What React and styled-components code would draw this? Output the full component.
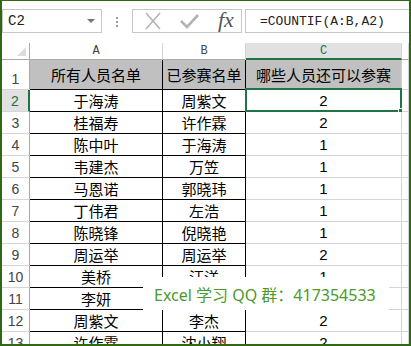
import React from "react";
import styled, { createGlobalStyle } from "styled-components";

const GREEN = "#217346";

const rows = [
  ["于海涛", "周紫文", "2"],
  ["桂福寿", "许作霖", "2"],
  ["陈中叶", "于海涛", "1"],
  ["韦建杰", "万笠", "1"],
  ["马恩诺", "郭晓玮", "1"],
  ["丁伟君", "左浩", "1"],
  ["陈晓锋", "倪晓艳", "1"],
  ["周运举", "周运举", "2"],
  ["美桥", "汪洋", "1"],
  ["李妍", "", ""],
  ["周紫文", "李杰", "2"],
  ["许作霖", "沈小翔", "2"],
];

function App() {
  return (
    <>
      <GlobalStyle />
      <Frame>
        <Toolbar>
          <NameBox>
            <span>C2</span>
            <Caret />
          </NameBox>
          <Grip>
            <i />
            <i />
            <i />
          </Grip>
          <ButtonsBox>
            <IconSlot>
              <svg width="20" height="18" viewBox="0 0 20 18">
                <path d="M3 1 L17 17 M17 1 L3 17" stroke="#b4b4b4" strokeWidth="1.6" fill="none" />
              </svg>
            </IconSlot>
            <IconSlot>
              <svg width="20" height="18" viewBox="0 0 20 18">
                <path d="M2 9 L8 15 L19 3" stroke="#b4b4b4" strokeWidth="2.6" fill="none" />
              </svg>
            </IconSlot>
            <Fx>fx</Fx>
          </ButtonsBox>
          <FormulaBox>=COUNTIF(A:B,A2)</FormulaBox>
        </Toolbar>

        <Sheet>
          <Corner>
            <CornerMark />
          </Corner>
          <ColHead>A</ColHead>
          <ColHead>B</ColHead>
          <ColHead $active>C</ColHead>
          <ColHead />

          <RowHead>1</RowHead>
          <Cell $fill $black>所有人员名单</Cell>
          <Cell $fill $black>已参赛名单</Cell>
          <Cell $fill>哪些人员还可以参赛</Cell>
          <Cell />

          {rows.map((r, i) => (
            <React.Fragment key={i}>
              <RowHead $active={i === 0}>{i + 2}</RowHead>
              <Cell $black>{r[0]}</Cell>
              <Cell $black>{r[1]}</Cell>
              <Cell $num>
                {r[2]}
                {i === 0 && (
                  <Selection>
                    <Handle />
                  </Selection>
                )}
              </Cell>
              <Cell />
            </React.Fragment>
          ))}
        </Sheet>

        <Watermark>Excel 学习 QQ 群：417354533</Watermark>
      </Frame>
    </>
  );
}

export default App;

const GlobalStyle = createGlobalStyle`
  html, body {
    margin: 0;
    padding: 0;
    background: #fff;
  }
  body {
    font-family: "Noto Sans CJK SC", sans-serif;
  }
`;

const Frame = styled.div`
  position: relative;
  width: 411px;
  height: 346px;
  box-sizing: border-box;
  border: 2px solid #2e6a14;
  border-top-width: 1px;
  overflow: hidden;
  display: flex;
  flex-direction: column;
`;

const Toolbar = styled.div`
  height: 42px;
  flex-shrink: 0;
  box-sizing: border-box;
  padding-top: 8px;
  display: flex;
  align-items: flex-start;
`;

const NameBox = styled.div`
  width: 100px;
  height: 24px;
  box-sizing: border-box;
  border: 1px solid #c6c6c6;
  padding: 0 6px 0 5px;
  display: flex;
  align-items: center;
  justify-content: space-between;
  font-family: "Liberation Mono", monospace;
  font-size: 14px;
  color: #222;
`;

const Caret = styled.span`
  width: 0;
  height: 0;
  border-left: 4px solid transparent;
  border-right: 4px solid transparent;
  border-top: 4px solid #777;
`;

const Grip = styled.div`
  margin: 8px 0 0 14px;
  display: flex;
  flex-direction: column;
  gap: 2px;

  i {
    display: block;
    width: 2px;
    height: 2px;
    background: #9a9a9a;
  }
`;

const ButtonsBox = styled.div`
  margin-left: 14px;
  width: 110px;
  height: 24px;
  box-sizing: border-box;
  border: 1px solid #c6c6c6;
  display: flex;
  align-items: center;
  padding-left: 9px;
  gap: 14px;
`;

const IconSlot = styled.span`
  display: flex;
  width: 22px;
  justify-content: center;
`;

const Fx = styled.span`
  font-family: "Liberation Serif", serif;
  font-style: italic;
  font-size: 22px;
  color: #555;
  line-height: 1;
  margin: -2px 0 0 4px;
`;

const FormulaBox = styled.div`
  margin-left: 3px;
  flex: 1;
  height: 24px;
  box-sizing: border-box;
  border: 1px solid #c6c6c6;
  border-right: none;
  padding-left: 14px;
  display: flex;
  align-items: center;
  font-family: "Liberation Mono", monospace;
  font-size: 13px;
  color: #222;
`;

const Sheet = styled.div`
  display: grid;
  grid-template-columns: 28px 133px 83px 156px 1fr;
  grid-template-rows: 17px 30px;
  grid-auto-rows: 22px;
`;

const Corner = styled.div`
  position: relative;
  box-sizing: border-box;
  border-right: 1px solid #ababab;
  border-bottom: 1px solid #ababab;
`;

const CornerMark = styled.span`
  position: absolute;
  right: 3px;
  bottom: 3px;
  width: 0;
  height: 0;
  border-left: 9px solid transparent;
  border-bottom: 9px solid #dcdcdc;
`;

const ColHead = styled.div`
  box-sizing: border-box;
  display: flex;
  align-items: center;
  justify-content: center;
  background: ${(p) => (p.$active ? "#e1e1e1" : "#fff")};
  border-right: 1px solid #d4d4d4;
  border-bottom: ${(p) => (p.$active ? `2px solid ${GREEN}` : "1px solid #ababab")};
  font-family: "Liberation Mono", monospace;
  font-size: 12px;
  color: ${(p) => (p.$active ? GREEN : "#444")};
`;

const RowHead = styled.div`
  box-sizing: border-box;
  display: flex;
  align-items: flex-end;
  justify-content: center;
  padding-bottom: 2px;
  background: ${(p) => (p.$active ? "#e1e1e1" : "#fff")};
  border-right: ${(p) => (p.$active ? `2px solid ${GREEN}` : "1px solid #ababab")};
  border-bottom: 1px solid #d4d4d4;
  font-family: "Liberation Sans", sans-serif;
  font-size: 14px;
  color: ${(p) => (p.$active ? GREEN : "#444")};
`;

const Cell = styled.div`
  position: relative;
  box-sizing: border-box;
  display: flex;
  align-items: center;
  justify-content: center;
  background: ${(p) => (p.$fill ? "#c0c0c0" : "#fff")};
  border-right: 1px solid ${(p) => (p.$black ? "#000" : "#d4d4d4")};
  border-bottom: 1px solid ${(p) => (p.$black ? "#000" : "#d4d4d4")};
  font-family: ${(p) =>
    p.$num ? '"Liberation Sans", sans-serif' : '"Noto Sans CJK SC", sans-serif'};
  font-size: 15px;
  line-height: 1;
  color: #000;
  white-space: nowrap;
`;

const Selection = styled.span`
  position: absolute;
  top: -2px;
  left: -1px;
  right: -1px;
  bottom: -1px;
  border: 2px solid ${GREEN};
`;

const Handle = styled.span`
  position: absolute;
  right: -5px;
  bottom: -5px;
  width: 5px;
  height: 5px;
  background: ${GREEN};
  border: 1px solid #fff;
`;

const Watermark = styled.div`
  position: absolute;
  left: 141px;
  top: 276px;
  width: 246px;
  height: 33px;
  box-sizing: border-box;
  padding-left: 11px;
  background: #fff;
  display: flex;
  align-items: center;
  font-family: "Noto Sans", "Noto Sans CJK SC", sans-serif;
  font-size: 16px;
  color: #4c9a2a;
  white-space: nowrap;
`;
